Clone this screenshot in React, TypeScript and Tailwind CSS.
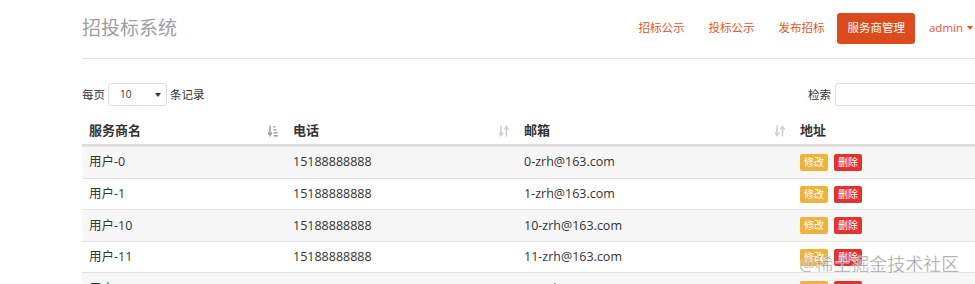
import { useState } from "react";

// 服务商管理页：顶部导航 + 分页选择/检索 + 斑马纹表格
const rows = ["0", "1", "10", "11", "12"].map((n) => ({
  name: `用户-${n}`,
  phone: "15188888888",
  email: `${n}-zrh@163.com`,
}));

const navLinks = ["招标公示", "投标公示", "发布招标"];

function SortIcon({ active }: { active?: boolean }) {
  // 排序图标：下箭头 + 上箭头 / 递增条
  return (
    <svg width="10" height="12" viewBox="0 0 10 12" className={active ? "text-[#a5a5a5]" : "text-[#d0d0d0]"}>
      <path d="M2 0.5v9M0 7.5l2 3 2-3" stroke="currentColor" strokeWidth="1.6" fill="none" />
      {active ? (
        <g fill="currentColor">
          <rect x="5.5" y="1" width="2" height="1.6" />
          <rect x="5.5" y="4" width="3" height="1.6" />
          <rect x="5.5" y="7" width="4" height="1.6" />
          <rect x="5.5" y="10" width="4.5" height="1.6" />
        </g>
      ) : (
        <path d="M7.5 11.5v-9M5.5 4.5l2-3 2 3" stroke="currentColor" strokeWidth="1.6" fill="none" />
      )}
    </svg>
  );
}

export default function App() {
  const [pageSize, setPageSize] = useState("10");
  const [query, setQuery] = useState("");

  return (
    <div
      className="relative h-[284px] w-[975px] overflow-hidden bg-white text-[12.5px] text-[#333]"
      style={{ fontFamily: '"Open Sans", "Noto Sans CJK SC", sans-serif' }}
    >
      <div className="pl-[82px]">
        <header className="flex h-[59px] items-center justify-between border-b border-[#e5e5e5] pb-[2px]">
          <h1 className="text-[19px] font-normal text-[#a0a0a0]">招投标系统</h1>
          <nav className="flex items-center text-[11.5px] text-[#e0562c]">
            {navLinks.map((l) => (
              <a key={l} className="px-[12px]">
                {l}
              </a>
            ))}
            <a className="ml-[1px] flex h-[31px] items-center rounded-[3px] bg-[#dc4b1c] px-[10px] text-white">
              服务商管理
            </a>
            <a className="flex items-center gap-[4px] pl-[14px] pr-[2px]">
              admin
              <span className="h-0 w-0 border-x-[3.5px] border-t-[4px] border-x-transparent border-t-[#e0562c]" />
            </a>
          </nav>
        </header>

        <div className="flex h-[55px] items-center justify-between pt-[16px] text-[11.5px]">
          <label className="flex items-center gap-[3px]">
            每页
            <span className="relative flex h-[23px] w-[59px] items-center rounded-[3px] border border-[#ddd]">
              <select
                value={pageSize}
                onChange={(e) => setPageSize(e.target.value)}
                className="absolute inset-0 appearance-none bg-transparent pl-[11px] text-[10px] outline-none"
              >
                <option value="10">10</option>
                <option value="25">25</option>
                <option value="50">50</option>
              </select>
              <span className="absolute right-[5px] top-[9px] h-0 w-0 border-x-[3px] border-t-[4px] border-x-transparent border-t-[#333]" />
            </span>
            条记录
          </label>
          <label className="flex items-center gap-[4px]">
            检索
            <input
              value={query}
              onChange={(e) => setQuery(e.target.value)}
              className="-mr-[30px] h-[23px] w-[170px] rounded-[3px] border border-[#ddd] outline-none"
            />
          </label>
        </div>

        <div className="w-[1000px]">
          <div className="grid h-[32px] grid-cols-[204px_231px_276px_1fr] items-center border-b-2 border-[#ddd] pt-[3px] text-[13px] font-bold">
            <div className="flex items-center justify-between pl-[7px] pr-[8px]">
              服务商名
              <SortIcon active />
            </div>
            <div className="flex items-center justify-between pl-[7px] pr-[8px]">
              电话
              <SortIcon />
            </div>
            <div className="flex items-center justify-between pl-[7px] pr-[8px]">
              邮箱
              <SortIcon />
            </div>
            <div className="pl-[7px]">地址</div>
          </div>
          {rows.map((r, i) => (
            <div
              key={r.name}
              className={`grid h-[31.6px] grid-cols-[204px_231px_276px_1fr] items-center border-t border-[#e3e3e3] pt-[1px] ${
                i % 2 === 0 ? "bg-[#f7f7f7]" : "bg-white"
              }`}
            >
              <div className="pl-[7px]">{r.name}</div>
              <div className="pl-[7px]">{r.phone}</div>
              <div className="pl-[7px]">{r.email}</div>
              <div className="flex gap-[6px] pl-[7px] text-[10px] text-white">
                <button className="h-[17px] w-[28px] rounded-[2px] bg-[#efb23f]">修改</button>
                <button className="h-[17px] w-[28px] rounded-[2px] bg-[#e0342c]">删除</button>
              </div>
            </div>
          ))}
        </div>
      </div>

      <div
        className="absolute left-[799px] top-[251px] text-[18px] text-[#7a7a7a]/80"
        style={{ WebkitTextStroke: "0.4px #fff" }}
      >
        @稀土掘金技术社区
      </div>
    </div>
  );
}
